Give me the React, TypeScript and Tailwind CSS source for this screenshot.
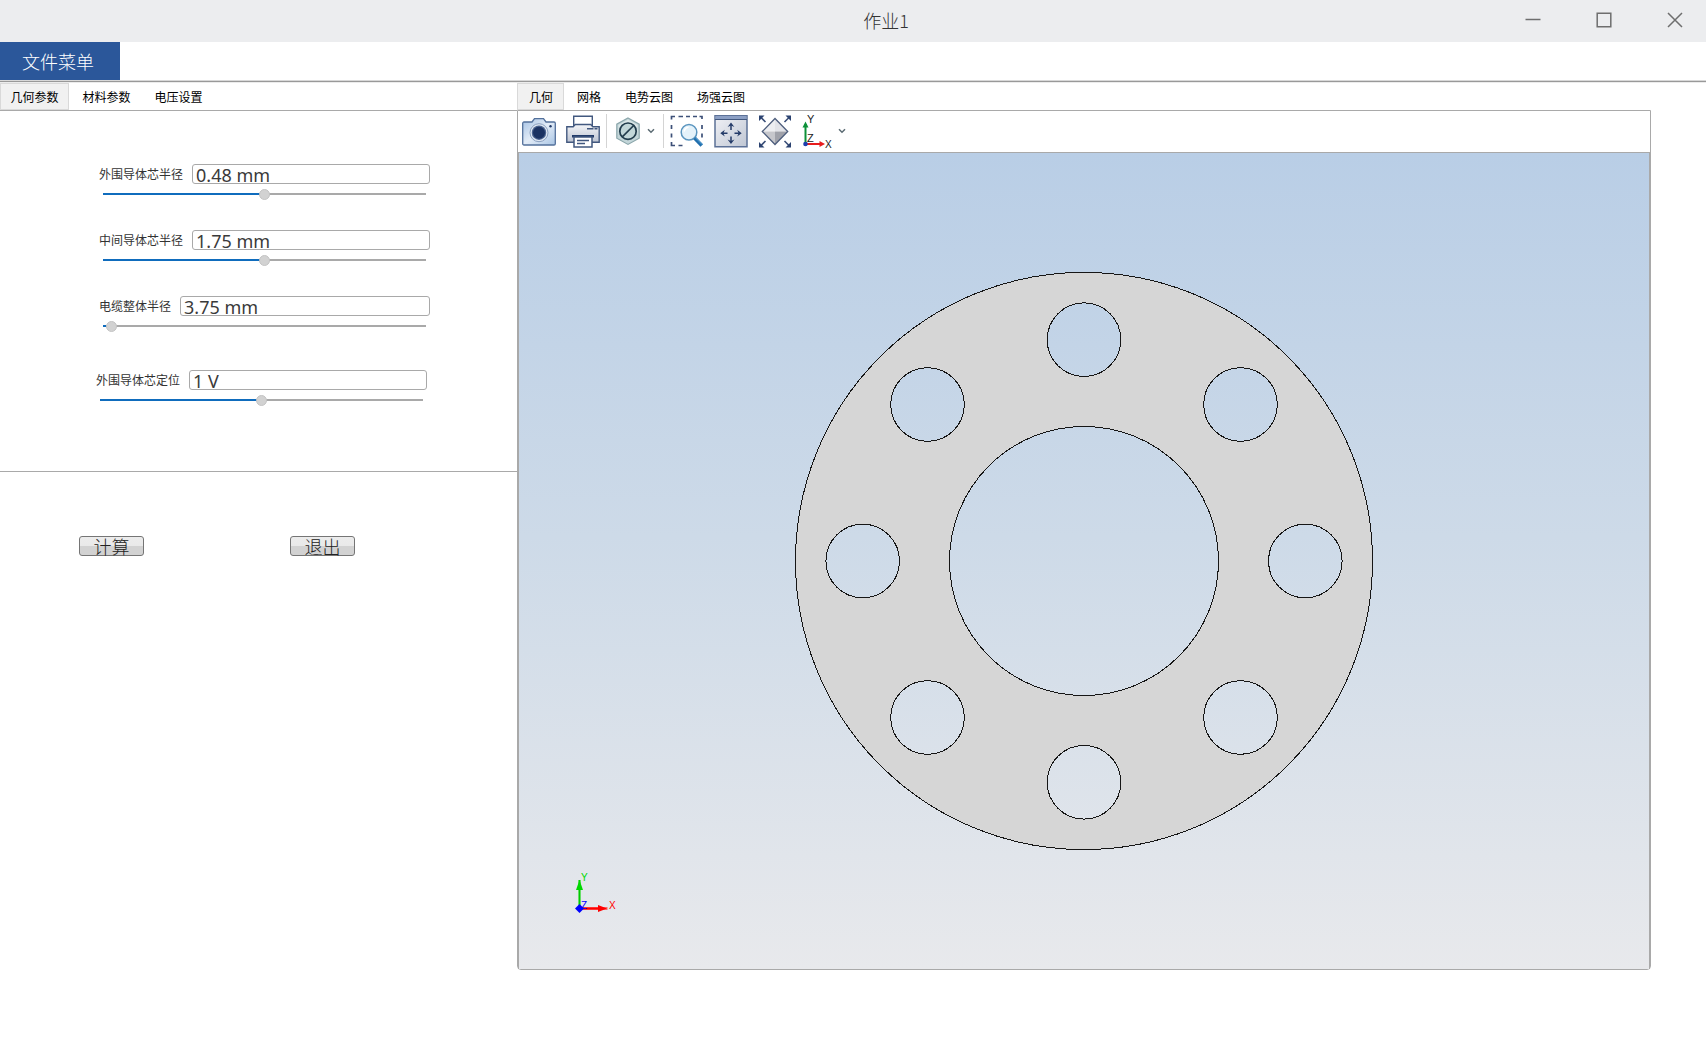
import { useState } from "react";
import type { CSSProperties, ReactNode } from "react";
import clsx from "clsx";

const paramTabs = ["几何参数", "材料参数", "电压设置"];
const viewTabs = ["几何", "网格", "电势云图", "场强云图"];

const radiusFields = [
  { id: "outer-radius", label: "外围导体芯半径", value: "0.48 mm", level: 50 },
  { id: "middle-radius", label: "中间导体芯半径", value: "1.75 mm", level: 50 },
  { id: "cable-radius", label: "电缆整体半径", value: "3.75 mm", level: 1 },
];

const positionField = { id: "outer-position", label: "外围导体芯定位", value: "1 V", level: 50 };

const TitleBar = () => {
  return (
    <header className="flex h-[42px] shrink-0 items-center bg-[#ecedef] text-[#6e6e6e]">
      <h1 className="flex-1 pb-0.5 pl-[270px] text-center text-lg leading-6 font-light text-[#333]">
        作业1
      </h1>
      <div className="flex gap-[9px] pb-[3px]">
        <button aria-label="最小化" className="flex w-[62px] justify-center">
          <svg width="16" height="16" fill="none" stroke="currentColor" strokeWidth="1.5">
            <path d="M0.5 7.500h15" />
          </svg>
        </button>
        <button aria-label="最大化" className="flex w-[62px] justify-center">
          <svg width="16" height="16" fill="none" stroke="currentColor" strokeWidth="1.5">
            <path d="M1.2 1.2h13.6v13.6H1.2z" />
          </svg>
        </button>
        <button aria-label="关闭" className="flex w-[62px] justify-center">
          <svg width="16" height="16" fill="none" stroke="currentColor" strokeWidth="1.5">
            <path d="M1 1l14 14M15 1L1 15" />
          </svg>
        </button>
      </div>
    </header>
  );
};

const Tabs = ({
  items,
  className,
  tabClassName,
}: {
  items: string[];
  className?: string;
  tabClassName: string;
}) => {
  const [active, setActive] = useState(items[0]);
  return (
    <div role="tablist" className={clsx("flex h-[27px] text-xs text-black", className)}>
      {items.map((item) => (
        <button
          key={item}
          role="tab"
          aria-selected={item === active}
          onClick={() => setActive(item)}
          className={clsx(
            "border pt-px",
            tabClassName,
            item === active ? "border-[#d9d9d9] bg-[#f1f1f1]" : "border-transparent"
          )}>
          {item}
        </button>
      ))}
    </div>
  );
};

const Field = ({
  id,
  label,
  value,
  level,
}: {
  id: string;
  label: string;
  value: string;
  level: number;
}) => {
  const [text, setText] = useState(value);
  const [position, setPosition] = useState(level);
  return (
    <div>
      <div className="flex h-5 items-center gap-[9px]">
        <label htmlFor={id} className="shrink-0 text-xs text-[#333]">
          {label}
        </label>
        <input
          id={id}
          value={text}
          onChange={(e) => setText(e.target.value)}
          className="h-5 min-w-0 flex-1 rounded-[3px] border border-[#a9a9a9] bg-white px-[3px] pt-0.5 font-['Noto_Sans',sans-serif] text-lg leading-[18px] text-[#3a3a3a] outline-none"
        />
      </div>
      <div className="mt-1 px-1">
        <input
          type="range"
          aria-label={label}
          value={position}
          onChange={(e) => setPosition(Number(e.target.value))}
          style={{ "--fill": `${position}%` } as CSSProperties}
          className="block h-3 w-full appearance-none bg-[linear-gradient(to_right,#0f6cbd_var(--fill),#a9a9a9_var(--fill))] bg-[length:100%_2px] bg-center bg-no-repeat outline-none [&::-webkit-slider-thumb]:size-[11px] [&::-webkit-slider-thumb]:appearance-none [&::-webkit-slider-thumb]:rounded-full [&::-webkit-slider-thumb]:border [&::-webkit-slider-thumb]:border-[#c4c4c4] [&::-webkit-slider-thumb]:bg-[#d2d2d2]"
        />
      </div>
    </div>
  );
};

const ActionButton = ({ children }: { children: ReactNode }) => {
  return (
    <button className="flex h-5 w-[65px] items-center justify-center rounded-[3px] border border-[#757575] bg-[linear-gradient(#ececec_0%,#e9e9e9_50%,#d2d2d2_50%,#d2d2d2_100%)] text-lg leading-[18px] font-light text-[#222]">
      {children}
    </button>
  );
};

const CameraIcon = () => (
  <svg width="34" height="34" viewBox="0 0 34 34">
    <defs>
      <linearGradient id="camera-body" x2="1" y2="1">
        <stop offset="0" stopColor="#a5c2e4" />
        <stop offset="0.5" stopColor="#e3ecf7" />
        <stop offset="1" stopColor="#a9c5e4" />
      </linearGradient>
    </defs>
    <path
      d="M2 8h8l2.500-3.400h9L24 8h8a1.300 1.300 0 0 1 1.300 1.300v20.400A1.300 1.300 0 0 1 32 31H2A1.300 1.300 0 0 1 .7 29.700V9.300A1.300 1.300 0 0 1 2 8z"
      fill="url(#camera-body)"
      stroke="#53709b"
      strokeWidth="1.300"
    />
    <circle cx="17" cy="18.700" r="9" fill="#dfe7f2" stroke="#8aa0c0" />
    <circle cx="17" cy="18.700" r="7.200" fill="#4a628e" />
    <circle cx="17" cy="18.700" r="6" fill="#1b3262" />
    <circle cx="28.500" cy="12.300" r="1.200" fill="#1f3866" />
  </svg>
);

const PrinterIcon = () => (
  <svg width="34" height="34" viewBox="0 0 34 34">
    <defs>
      <linearGradient id="printer-body" x2="0" y2="1">
        <stop offset="0" stopColor="#f4f5f8" />
        <stop offset="1" stopColor="#bcc3d1" />
      </linearGradient>
    </defs>
    <path d="M7.700 14V2.200h18.600V14" fill="#fff" stroke="#42587f" strokeWidth="1.400" />
    <path
      d="M.8 12.800h6.400l2-2.300h15.600l2 2.300h6.400v15.400H.8z"
      fill="url(#printer-body)"
      stroke="#42587f"
      strokeWidth="1.400"
    />
    <path d="M21 14.800h6.500M28.500 14.800h3" stroke="#42587f" strokeWidth="1.500" />
    <path d="M6 21h22v2.500H6z" fill="#223b69" />
    <path d="M8 23h18v10H8z" fill="#fff" stroke="#42587f" strokeWidth="1.500" />
    <path d="M11 26.500h12M11 29.500h8" stroke="#42587f" strokeWidth="1.400" />
  </svg>
);

const HideIcon = () => (
  <svg width="34" height="34" viewBox="0 0 34 34">
    <path
      d="M17 4l11.200 6.200v14L17 30.400 5.800 24.200v-14z"
      fill="#c3d6d9"
      stroke="#8ba6ab"
      strokeWidth="1.200"
    />
    <path d="M17 5.700l9.500 5.300v6.200h-19V11z" fill="#dce8e9" />
    <circle cx="17" cy="17.200" r="8.200" fill="#c2d7d9" stroke="#223d4d" strokeWidth="1.700" />
    <path d="M11.300 22.900L22.700 11.500" stroke="#223d4d" strokeWidth="1.700" />
  </svg>
);

const ZoomBoxIcon = () => (
  <svg width="34" height="34" viewBox="0 0 34 34" fill="none">
    <g stroke="#3d5078" strokeWidth="1.700">
      <path d="M1.500 5.500V2.500H5M8.500 2.500H13M16 2.500h4M23 2.500h4M29.500 2.500H32V5" />
      <path d="M1.500 11v4M1.500 19.500v4M1.500 28v3.500H5M8.500 31.500h4M32 11v4M32 19.500v4" />
    </g>
    <circle cx="19" cy="18.200" r="7.800" fill="#e4f2fa" stroke="#5a95bf" strokeWidth="1.500" />
    <path d="M14.200 17.500a5 5 0 0 1 4.300-4.200" stroke="#fff" strokeWidth="1.600" />
    <path d="M24.500 24l7.300 7.500" stroke="#216fad" strokeWidth="3.600" />
    <path d="M25.300 23.500l7 7.200" stroke="#5aa5d8" strokeWidth="1" />
  </svg>
);

const FitIcon = () => (
  <svg width="34" height="34" viewBox="0 0 34 34">
    <defs>
      <linearGradient id="fit-body" x2="1" y2="1">
        <stop offset="0" stopColor="#f1f2f6" />
        <stop offset="1" stopColor="#bfc6d3" />
      </linearGradient>
    </defs>
    <path d="M1 1.800h32v31H1z" fill="url(#fit-body)" stroke="#5c7197" strokeWidth="1.500" />
    <path d="M1.500 2h31v3.500h-31z" fill="#8b9fc4" />
    <path d="M1 5.500h32" stroke="#42587f" />
    <path d="M17 10.500v5.500M17 22.500V28M8 19.200h5.500M20.500 19.200H26" stroke="#243b68" strokeWidth="1.500" />
    <path
      d="M17 8.500l3.400 4.500-3.400-1.400-3.400 1.400zM17 30l3.400-4.500-3.400 1.400-3.400-1.400zM6.300 19.200l4.500-3.400-1.400 3.400 1.400 3.400zM27.700 19.200l-4.500-3.400 1.400 3.400-1.400 3.400z"
      fill="#243b68"
    />
  </svg>
);

const ExtentsIcon = () => (
  <svg width="34" height="34" viewBox="0 0 34 34">
    <path d="M17 4.500L29.700 17.500H4.300z" fill="#e2e3e8" />
    <path d="M4.300 17.500h25.400L17 30.500z" fill="#a0a2aa" />
    <path d="M17 4.500v26L4.300 17.500z" fill="#fff" opacity="0.4" />
    <path d="M17 4.500l12.700 13L17 30.500 4.300 17.500z" fill="none" stroke="#4d5d7c" strokeWidth="1.300" />
    <path
      d="M3 3.500l4.500 4.500M31 3.500L26.500 8M3 31.500L7.500 27M31 31.500L26.500 27"
      stroke="#3a4f79"
      strokeWidth="1.600"
    />
    <path
      d="M1 1.500h5.500L1 7zM33 1.500V7l-5.500-5.500zM1 33.500V28l5.500 5.500zM33 33.500h-5.500L33 28z"
      fill="#2b4270"
    />
  </svg>
);

const AxesIcon = () => (
  <svg width="36" height="34" viewBox="0 0 36 34" fontFamily="Liberation Sans, sans-serif">
    <path d="M3.500 30V10" stroke="#0d9138" strokeWidth="2" />
    <path d="M3.500 7.500l3 6h-6z" fill="#0d9138" />
    <path d="M3.500 30h15" stroke="#e81c1c" strokeWidth="2" />
    <path d="M23 30l-5.500-3v6z" fill="#e81c1c" />
    <circle cx="3.500" cy="30" r="2.300" fill="#1c3fae" />
    <text x="5" y="9" fontSize="11" fill="#222">
      Y
    </text>
    <text x="5" y="27.500" fontSize="11" fill="#222">
      Z
    </text>
    <text x="23" y="33.500" fontSize="10" fill="#222">
      X
    </text>
  </svg>
);

const Chevron = () => (
  <svg width="8" height="6" viewBox="0 0 8 6" fill="none">
    <path d="M1 1.200l3 3 3-3" stroke="#5b6b73" strokeWidth="1.500" />
  </svg>
);

const ToolButton = ({ label, children }: { label: string; children: ReactNode }) => {
  return (
    <button aria-label={label} className="flex shrink-0 items-center">
      {children}
    </button>
  );
};

const Toolbar = () => {
  return (
    <div className="flex h-[42px] items-center border-b border-[#a9a9a9] px-1 pb-0.5">
      <div className="flex gap-2.5 pr-1.5">
        <ToolButton label="快照">
          <CameraIcon />
        </ToolButton>
        <ToolButton label="打印">
          <PrinterIcon />
        </ToolButton>
      </div>
      <div className="flex h-[34px] items-center gap-0.5 border-x border-[#d4d4d4] pr-2 pl-1">
        <ToolButton label="隐藏">
          <HideIcon />
        </ToolButton>
        <ToolButton label="隐藏选项">
          <Chevron />
        </ToolButton>
      </div>
      <div className="flex items-center gap-2.5 pl-1.5">
        <ToolButton label="框选缩放">
          <ZoomBoxIcon />
        </ToolButton>
        <ToolButton label="适应窗口">
          <FitIcon />
        </ToolButton>
        <ToolButton label="缩放到范围">
          <ExtentsIcon />
        </ToolButton>
        <div className="flex items-center">
          <ToolButton label="视图方向">
            <AxesIcon />
          </ToolButton>
          <ToolButton label="视图选项">
            <Chevron />
          </ToolButton>
        </div>
      </div>
    </div>
  );
};

const holes = Array.from({ length: 8 }, (_, i) => {
  const angle = (i * Math.PI) / 4;
  return { x: 290 + 221.3 * Math.cos(angle), y: 290 + 221.3 * Math.sin(angle) };
});

const circlePath = (x: number, y: number, r: number) =>
  `M${x - r} ${y}a${r} ${r} 0 1 0 ${2 * r} 0a${r} ${r} 0 1 0 ${-2 * r} 0z`;

// cross section of the cable: sheath with the conductors cut out
const CableSection = () => {
  const d = [
    circlePath(290, 290, 288.5),
    circlePath(290, 290, 134.5),
    ...holes.map((hole) => circlePath(hole.x, hole.y, 36.8)),
  ].join("");
  return (
    <svg width="580" height="580" viewBox="0 0 580 580">
      <path
        d={d}
        fill="#d6d6d6"
        fillRule="evenodd"
        stroke="#161616"
        strokeWidth="1"
        shapeRendering="crispEdges"
      />
    </svg>
  );
};

const AxisTriad = () => (
  <svg
    width="48"
    height="48"
    viewBox="0 0 48 48"
    fill="none"
    fontFamily="Liberation Sans, sans-serif"
    fontSize="10"
    className="absolute bottom-[54px] left-[52px]">
    <path d="M8.500 40V13" stroke="#66dd66" strokeWidth="3" />
    <path d="M8.500 40V13" stroke="#00c800" />
    <path d="M8.500 13l3.500 10H5z" fill="#00d800" />
    <path d="M8.500 41.500h28" stroke="#ff6666" strokeWidth="3" />
    <path d="M8.500 41.500h20" stroke="#f00" strokeWidth="2" />
    <path d="M36 41.500l-9-3.500v7z" fill="#f00" />
    <path d="M8.500 37l4.500 4.500-4.500 4.500L4 41.500z" fill="#00f" />
    <text x="10" y="14" fill="#00d800">
      Y
    </text>
    <text x="10" y="42" fill="#00f">
      Z
    </text>
    <text x="38" y="42" fill="#f00">
      X
    </text>
  </svg>
);

export default function App() {
  return (
    <div className="flex min-h-screen flex-col bg-white font-['Noto_Sans_CJK_SC',sans-serif]">
      <TitleBar />
      <nav className="flex h-[41px] shrink-0 border-b border-[#ececec]">
        <div className="flex flex-1 border-b border-[#999]">
          <div className="flex flex-1 border-b border-[#d8d8d8]">
            <button className="bg-[#2b579a] pr-[26px] pl-[22px] text-lg leading-6 font-light text-white">
              文件菜单
            </button>
          </div>
        </div>
      </nav>
      <main className="flex flex-1 pr-[55px] pb-[79px]">
        <section className="flex w-[517px] shrink-0 flex-col">
          <Tabs items={paramTabs} className="gap-[3px]" tabClassName="w-[69px]" />
          <div className="h-[362px] border-y border-[#a9a9a9] pt-[53px]">
            <div className="flex flex-col gap-[30px] pr-[87px] pl-[99px]">
              {radiusFields.map((field) => (
                <Field key={field.id} {...field} />
              ))}
            </div>
            <div className="pt-[38px] pr-[90px] pl-24">
              <Field {...positionField} />
            </div>
          </div>
          <div className="flex gap-[146px] pt-16 pl-[79px]">
            <ActionButton>计算</ActionButton>
            <ActionButton>退出</ActionButton>
          </div>
        </section>
        <section className="flex min-w-0 flex-1 flex-col">
          <Tabs items={viewTabs} className="gap-px" tabClassName="pl-[11px] pr-[10px]" />
          <div className="flex flex-1 flex-col rounded-b-sm border border-[#a9a9a9]">
            <Toolbar />
            <div className="relative flex flex-1 items-center justify-center border-x border-[#a9a9a9] bg-[linear-gradient(#b9cee6,#cddae8_47%,#e8e9ec)]">
              <CableSection />
              <AxisTriad />
            </div>
          </div>
        </section>
      </main>
    </div>
  );
}
